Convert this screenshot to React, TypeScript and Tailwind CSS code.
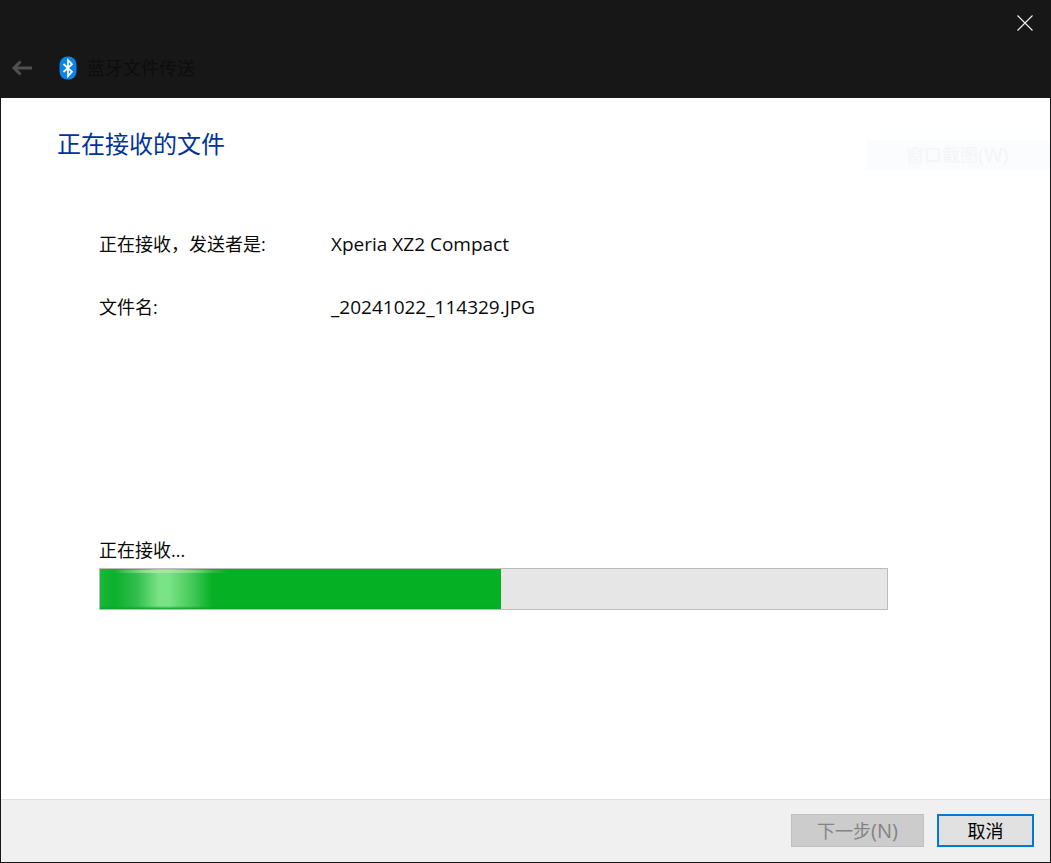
import React from "react";

const font = { cjk: "font-['Open_Sans','Noto_Sans_CJK_SC',sans-serif]" };

const BluetoothBadge = () => (
  <svg width="18" height="24" viewBox="0 0 18 24">
    <rect x="0.5" y="0.5" width="17" height="23" rx="8" fill="#0a84e8" />
    <path
      d="M4.5 8 L13 15.8 L9 20 V4 L13 8.2 L4.5 16"
      fill="none"
      stroke="#fff"
      strokeWidth="1.7"
    />
  </svg>
);

const BackArrow = () => (
  <svg width="22" height="16" viewBox="0 0 22 16">
    <path d="M21 8 H3 M9.5 1.5 L3 8 L9.5 14.5" fill="none" stroke="#505050" strokeWidth="3" />
  </svg>
);

const CloseIcon = () => (
  <svg width="16" height="16" viewBox="0 0 16 16">
    <path d="M0.5 0.5 L15.5 15.5 M15.5 0.5 L0.5 15.5" stroke="#f2f2f2" strokeWidth="1.1" />
  </svg>
);

const InfoRow = ({ label, value }: { label: string; value: string }) => (
  <div className="flex h-[27px] items-center text-[18px] leading-[27px] text-[#0a0a0a]">
    <div className="w-[232px]">{label}</div>
    <div className="text-[19px]">{value}</div>
  </div>
);

const App = () => {
  return (
    <div className={`flex h-[863px] w-[1051px] flex-col overflow-hidden bg-[#171717] ${font.cjk}`}>
      <header className="h-[98px] shrink-0 bg-[#171717]">
        <div className="flex h-[37px] items-start justify-end pr-[18px] pt-[15px]">
          <CloseIcon />
        </div>
        <div className="flex h-[61px] items-start pl-[11px] pt-[19px]">
          <div className="pt-[4px]">
            <BackArrow />
          </div>
          <div className="ml-[26px]">
            <BluetoothBadge />
          </div>
          <span className="ml-[10px] text-[18px] leading-[24px] text-[#0d0d0d]">蓝牙文件传送</span>
        </div>
      </header>

      <main className="relative mx-px flex min-h-0 flex-1 flex-col bg-white">
        {/* faint ghost of a screenshot tooltip */}
        <div className="absolute right-0 top-[42px] flex h-[30px] w-[184px] items-center bg-[#fbfcfe] pl-[40px] text-[18px] text-[#f4f5f7]">
          窗口截图<span className="text-[20px]">(W)</span>
        </div>

        <h1 className="pl-[56px] pt-[28px] text-[24px] leading-[36px] font-normal text-[#003399]">
          正在接收的文件
        </h1>

        <div className="flex flex-col gap-[36px] pl-[98px] pt-[69px]">
          <InfoRow label="正在接收，发送者是:" value="Xperia XZ2 Compact" />
          <InfoRow label="文件名:" value="_20241022_114329.JPG" />
        </div>

        <div className="pl-[98px] pt-[216px]">
          <div className="h-[27px] text-[18px] leading-[27px] text-[#0a0a0a]">正在接收...</div>
          <div className="mt-[4px] h-[42px] w-[789px] border border-[#bcbcbc] bg-[#e6e6e6]">
            <div className="relative h-full w-[401px] overflow-hidden bg-[#06b025]">
              <div className="absolute inset-y-0 left-0 w-[125px] bg-[linear-gradient(90deg,#1ab739_0%,#0cb02b_12%,#33bf4e_30%,#7ae385_47%,#7ae385_55%,#4acb5e_72%,#06b025_90%)]" />
              <div className="absolute left-[13px] top-[1px] h-[3px] w-[115px] bg-[linear-gradient(90deg,#06b02500,#a3e9ab_40%,#06b02500)]" />
              <div className="absolute inset-x-0 bottom-0 h-[3px] bg-[linear-gradient(180deg,#06b02500,#0aa62a)]" />
            </div>
          </div>
        </div>

        <footer className="mt-auto flex h-[63px] shrink-0 items-start justify-end border-t border-[#dfdfdf] bg-[#f0f0f0] pr-[16px] pt-[14px]">
          <button className="h-[33px] w-[133px] border border-[#c0c0c0] bg-[#cccccc] text-[18px] leading-none text-[#838383]">
            下一步<span className="text-[20px]">(N)</span>
          </button>
          <button className="ml-[13px] h-[33px] w-[97px] border-2 border-[#0078d7] bg-[#e1e1e1] text-[18px] leading-none text-black">
            取消
          </button>
        </footer>
      </main>
      <div className="h-px shrink-0 bg-[#171717]" />
    </div>
  );
};

export default App;
